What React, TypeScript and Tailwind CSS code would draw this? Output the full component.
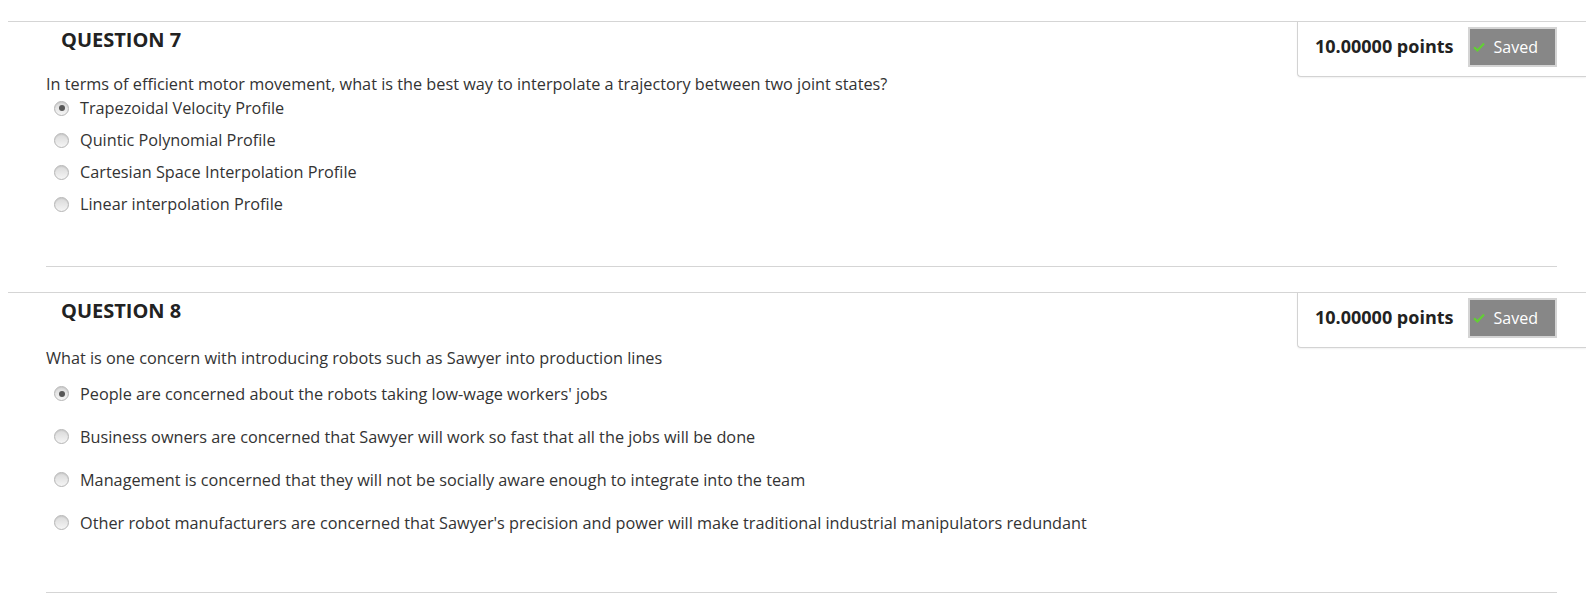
import React from "react";

type Question = {
  number: number;
  text: string;
  options: string[];
  selected: number;
  rowHeight: string;
  textPad: string;
  firstGap: string;
  bottomPad: string;
};

const questions: Question[] = [
  {
    number: 7,
    text: "In terms of efficient motor movement, what is the best way to interpolate a trajectory between two joint states?",
    options: [
      "Trapezoidal Velocity Profile",
      "Quintic Polynomial Profile",
      "Cartesian Space Interpolation Profile",
      "Linear interpolation Profile",
    ],
    selected: 0,
    rowHeight: "h-[32px]",
    textPad: "pt-[21px]",
    firstGap: "-mt-[2px]",
    bottomPad: "h-[46px]",
  },
  {
    number: 8,
    text: "What is one concern with introducing robots such as Sawyer into production lines",
    options: [
      "People are concerned about the robots taking low-wage workers' jobs",
      "Business owners are concerned that Sawyer will work so fast that all the jobs will be done",
      "Management is concerned that they will not be socially aware enough to integrate into the team",
      "Other robot manufacturers are concerned that Sawyer's precision and power will make traditional industrial manipulators redundant",
    ],
    selected: 0,
    rowHeight: "h-[43px]",
    textPad: "pt-[24px]",
    firstGap: "mt-[4px]",
    bottomPad: "h-[48px]",
  },
];

function Radio({ checked }: { checked: boolean }) {
  return (
    <span className="flex h-[15px] w-[15px] shrink-0 items-center justify-center rounded-full border border-[#b5b5b5] bg-gradient-to-b from-[#d9d9d9] to-[#f5f5f5] shadow-[inset_0_1px_1px_rgba(0,0,0,0.08)]">
      {checked && <span className="h-[6px] w-[6px] rounded-full bg-[#575757]" />}
    </span>
  );
}

function PointsBox() {
  return (
    <div className="float-right flex h-[55px] w-[289px] items-start rounded-bl-[4px] border-b border-l border-[#d3d3d3] bg-white pl-[17px] pt-[5px] shadow-[0_1px_2px_rgba(0,0,0,0.06)]">
      <span className="mt-[6px] text-[18px] font-bold leading-[26px] text-[#222]">10.00000 points</span>
      <div className="ml-[15px] flex h-[40px] w-[89px] items-center border-2 border-[#d4d4d4] bg-[#878787] pl-[3px] text-[16px] text-white">
        <svg width="12" height="10" viewBox="0 0 12 10" className="mr-[8px]">
          <path d="M1 5.2 L4.4 8.4 L11 1.6" fill="none" stroke="#62d034" strokeWidth="2.2" />
        </svg>
        Saved
      </div>
    </div>
  );
}

function QuestionBlock({ q }: { q: Question }) {
  return (
    <section>
      <div className="ml-[8px] border-t border-[#d5d5d5]">
        <PointsBox />
        <h2 className="pl-[53px] pt-[5px] text-[20px] font-bold leading-[26px] text-[#222]">
          QUESTION {q.number}
        </h2>
      </div>
      <div className={`pl-[46px] ${q.textPad}`}>
        <p className="text-[16.25px] leading-[20px] text-[#333]">{q.text}</p>
        <ul className={q.firstGap}>
          {q.options.map((opt, i) => (
            <li key={opt} className={`flex items-center gap-[11px] pl-[8px] ${q.rowHeight}`}>
              <Radio checked={i === q.selected} />
              <span className="text-[16.25px] leading-[20px] text-[#333]">{opt}</span>
            </li>
          ))}
        </ul>
      </div>
      <div className={q.bottomPad} />
      <hr className="ml-[46px] mr-[29px] border-[#d5d5d5]" />
    </section>
  );
}

export default function App() {
  return (
    <div className="min-h-[603px] w-full bg-white pt-[21px] font-['Open_Sans',sans-serif]">
      <QuestionBlock q={questions[0]} />
      <div className="h-[25px]" />
      <QuestionBlock q={questions[1]} />
    </div>
  );
}
